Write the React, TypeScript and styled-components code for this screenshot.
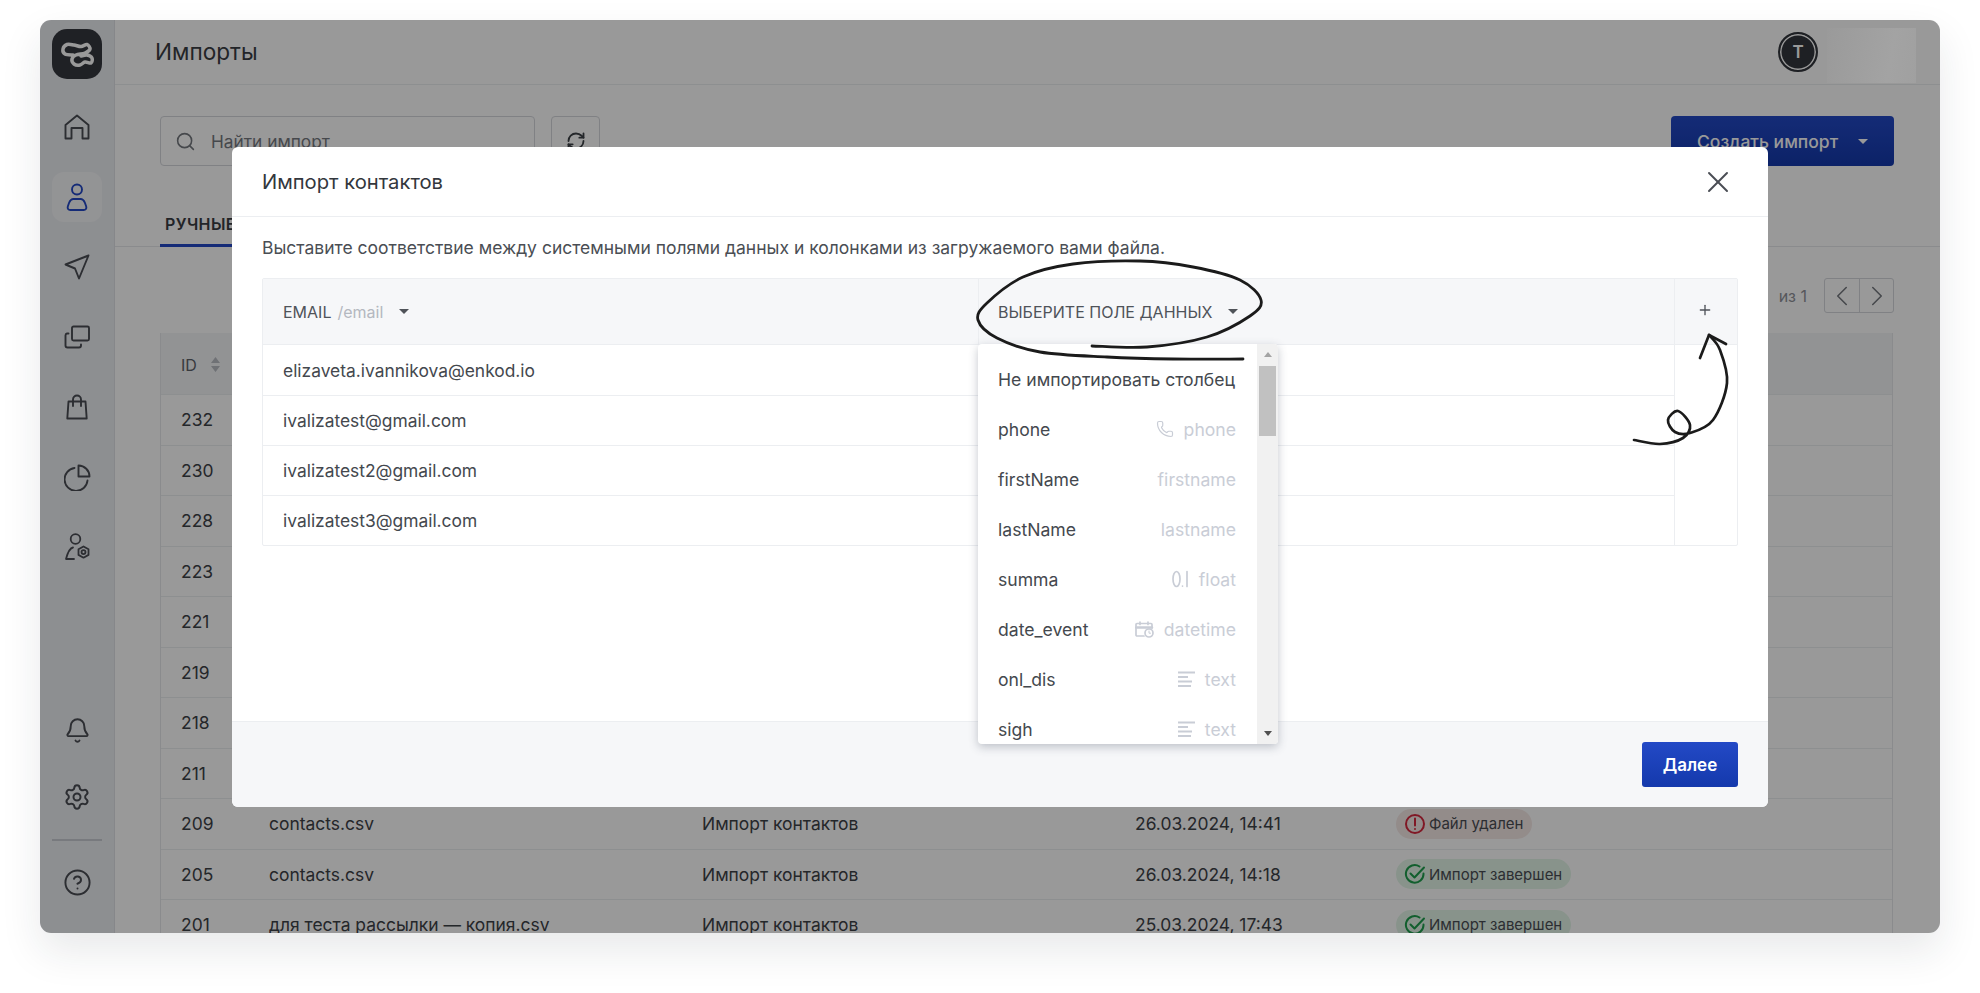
import React from 'react'
import styled, { createGlobalStyle } from 'styled-components'
import { Bell, CircleHelp, ChevronLeft, ChevronRight, Phone, Plus, RefreshCw, Search, Settings, X } from 'lucide-react'

const GlobalStyle = createGlobalStyle`
  html, body {
    margin: 0;
    background: #fff;
    overflow: hidden;
  }
  * {
    box-sizing: border-box;
  }
`

const Page = styled.div`
  position: relative;
  width: 1980px;
  height: 993px;
  padding: 20px 40px 60px;
  background: #fff;
  font-family: Inter, "Noto Sans", sans-serif;
  color: #3d4147;
`

const Window = styled.div`
  position: relative;
  display: flex;
  width: 1900px;
  height: 913px;
  overflow: hidden;
  border-radius: 11px;
  background: #fff;
  box-shadow: 0 18px 40px rgba(30, 35, 50, 0.1);
`

const Sidebar = styled.aside`
  display: flex;
  flex-direction: column;
  align-items: center;
  flex: 0 0 75px;
  padding: 9px 0 26px;
  background: #eceef2;
  border-right: 1px solid #dfe1e6;
`

const Logo = styled.div`
  display: flex;
  align-items: center;
  justify-content: center;
  width: 50px;
  height: 50px;
  margin-bottom: 23px;
  border-radius: 15px;
  background: #35383f;
`

const NavList = styled.nav`
  display: flex;
  flex-direction: column;
  gap: 20px;
`

const NavBottom = styled.div`
  display: flex;
  flex-direction: column;
  align-items: center;
  gap: 17px;
  margin-top: auto;
`

const NavItem = styled.div<{ $active?: boolean }>`
  display: flex;
  align-items: center;
  justify-content: center;
  width: 50px;
  height: 50px;
  border-radius: 12px;
  background: ${p => (p.$active ? '#f6f7f9' : 'transparent')};
  color: ${p => (p.$active ? '#2349c6' : '#4a4d54')};
`

const NavDivider = styled.div`
  width: 50px;
  height: 2px;
  margin-bottom: -1px;
  background: #c9ccd2;
`

const Main = styled.main`
  flex: 1;
  min-width: 0;
  display: flex;
  flex-direction: column;
`

const Header = styled.header`
  display: flex;
  align-items: center;
  flex: 0 0 65px;
  padding: 0 0 0 40px;
  border-bottom: 1px solid #eceef1;
`

const PageTitle = styled.h1`
  margin: 0;
  font-size: 22.6px;
  line-height: 30px;
  font-weight: 400;
  color: #3a3d43;
`

const Avatar = styled.div`
  display: flex;
  align-items: center;
  justify-content: center;
  width: 40px;
  height: 40px;
  margin-left: auto;
  margin-right: 122px;
  border-radius: 50%;
  background: #33363c;
  border: 2px solid #33363c;
  box-shadow: inset 0 0 0 1.5px #fff;
  color: #fff;
  font-size: 17px;
  font-weight: 600;
`

const Toolbar = styled.div`
  display: flex;
  flex: 0 0 81px;
  align-items: flex-start;
  gap: 16px;
  padding: 31px 46px 0 45px;
`

const SearchBox = styled.div`
  display: flex;
  align-items: center;
  gap: 15px;
  width: 375px;
  height: 50px;
  padding: 0 14px;
  border: 1px solid #d5d7dc;
  border-radius: 4px;
  color: #75797f;
  font-size: 17.3px;
`

const RefreshButton = styled.div`
  display: flex;
  align-items: center;
  justify-content: center;
  width: 49px;
  height: 50px;
  border: 1px solid #d5d7dc;
  border-radius: 4px;
  color: #3d4147;
`

const CreateButton = styled.div`
  display: flex;
  align-items: center;
  gap: 4px;
  width: 223px;
  height: 50px;
  margin-left: auto;
  padding-left: 26px;
  border-radius: 4px;
  background: linear-gradient(180deg, #2349c6, #1439ac);
  color: #fff;
  font-size: 17.5px;
  font-weight: 500;
`

const Tabs = styled.div`
  display: flex;
  flex: 0 0 81px;
  padding-left: 45px;
  align-items: flex-end;
  border-bottom: 1px solid #e6e8ec;
`

const Tab = styled.div`
  width: 120px;
  height: 56px;
  padding: 21px 0 0 5px;
  border-bottom: 3px solid #2349c6;
  margin-bottom: -1px;
  font-size: 16px;
  line-height: 24px;
  font-weight: 600;
  color: #3a3d43;
  letter-spacing: 0.4px;
`

const Pager = styled.div`
  display: flex;
  flex: 0 0 35px;
  align-items: center;
  justify-content: flex-end;
  margin: 31px 46px 20px 45px;
  font-size: 16px;
  color: #8f9299;
`

const PagerInput = styled.div`
  width: 60px;
  height: 35px;
  border: 1px solid #d5d7dc;
  border-radius: 4px;
`

const PagerLabel = styled.span`
  margin: 0 17px 0 11px;
`

const PagerButtons = styled.div`
  display: flex;
  width: 70px;
  height: 35px;
  border: 1px solid #d5d7dc;
  border-radius: 3px;
  color: #75797f;
`

const PagerButton = styled.div`
  flex: 1;
  display: flex;
  align-items: center;
  justify-content: center;
  & + & {
    border-left: 1px solid #d5d7dc;
  }
`

const ImportsTable = styled.div`
  flex: 0 0 auto;
  margin: 0 47px 0 45px;
  border-left: 1px solid #e6e8ec;
  border-right: 1px solid #e6e8ec;
`

const TableRow = styled.div<{ $head?: boolean }>`
  display: grid;
  grid-template-columns: 88px 433px 433px 260px 1fr;
  align-items: center;
  height: ${p => (p.$head ? '62px' : '50.5px')};
  padding-left: 20px;
  padding-top: ${p => (p.$head ? '2px' : '0')};
  border-bottom: 1px solid #eceef1;
  background: ${p => (p.$head ? '#f4f5f7' : 'transparent')};
  font-size: ${p => (p.$head ? '16px' : '17.45px')};
  color: #3d4147;
`

const IdHead = styled.div`
  display: flex;
  align-items: center;
  gap: 14px;
  color: #5d6168;
`

const SortIcon = styled.svg`
  width: 9px;
  height: 15px;
  fill: #b9bcc3;
`

const StatusPill = styled.div<{ $tone: 'ok' | 'bad' }>`
  display: inline-flex;
  align-items: center;
  gap: 3px;
  height: 30px;
  padding: 0 9px 0 8px;
  border-radius: 15px;
  margin-left: 1px;
  font-size: 15px;
  color: #4a4d54;
  background: ${p => (p.$tone === 'ok' ? '#e3f6e8' : '#f6e9e7')};
  svg {
    color: ${p => (p.$tone === 'ok' ? '#1f9e4d' : '#d6293e')};
  }
`

const Overlay = styled.div`
  position: absolute;
  inset: 0;
  padding: 127px 0 0 192px;
  background: rgba(0, 0, 0, 0.4);
`

const NamePatch = styled.div`
  position: absolute;
  top: 8px;
  right: 24px;
  width: 89px;
  height: 55px;
  background: linear-gradient(100deg, #9a9a9a, #a3a3a3 70%, #a0a0a0);
`

const Modal = styled.section`
  display: flex;
  flex-direction: column;
  width: 1536px;
  height: 660px;
  border-radius: 6px;
  background: #fff;
`

const ModalHeader = styled.div`
  display: flex;
  align-items: center;
  justify-content: space-between;
  flex: 0 0 70px;
  padding: 0 32px 0 30px;
  border-bottom: 1px solid #eceef1;
`

const ModalTitle = styled.h2`
  margin: 0;
  font-size: 20.2px;
  line-height: 28px;
  font-weight: 400;
  color: #33373d;
`

const CloseIcon = styled(X)`
  color: #4a4d54;
`

const ModalBody = styled.div`
  flex: 1;
  padding: 19px 30px 0;
`

const Hint = styled.p`
  margin: 0 0 18px;
  font-size: 17.5px;
  line-height: 24px;
  color: #4a4e54;
`

const MapTable = styled.div`
  display: grid;
  grid-template-columns: 1fr 63px;
  height: 268px;
  border: 1px solid #eceef1;
  border-radius: 2px;
`

const MapColumns = styled.div`
  display: flex;
  flex-direction: column;
`

const MapHead = styled.div`
  display: grid;
  grid-template-columns: 715px 1fr;
  flex: 0 0 66px;
  background: #f6f7f9;
  border-bottom: 1px solid #eceef1;
`

const MapHeadCell = styled.div`
  position: relative;
  display: flex;
  align-items: center;
  padding: 0 20px;
  font-size: 16px;
  color: #4f5359;
  & + & {
    padding: 0 19px;
    border-left: 1px solid #eceef1;
  }
`

const FieldHint = styled.span`
  margin-left: 6px;
  color: #b4b8c0;
`

const Caret = styled.span<{ $light?: boolean }>`
  display: inline-block;
  margin-left: 16px;
  border-left: 5px solid transparent;
  border-right: 5px solid transparent;
  border-top: 5px solid ${p => (p.$light ? '#fff' : '#4f5359')};
`

const MapRow = styled.div`
  display: grid;
  grid-template-columns: 715px 1fr;
  flex: 0 0 50px;
  align-items: center;
  padding-left: 20px;
  font-size: 17.4px;
  color: #44484e;
  & + & {
    border-top: 1px solid #eceef1;
  }
`

const AddColumn = styled.div`
  border-left: 1px solid #eceef1;
`

const AddHead = styled.div`
  display: flex;
  align-items: center;
  justify-content: center;
  height: 66px;
  padding: 0 2px 4px 0;
  background: #f6f7f9;
  border-bottom: 1px solid #eceef1;
  color: #4f5359;
`

const Dropdown = styled.div`
  position: absolute;
  top: 65px;
  left: -1px;
  z-index: 2;
  display: flex;
  width: 300px;
  height: 400px;
  overflow: hidden;
  border-radius: 4px;
  background: #fff;
  box-shadow: 0 3px 10px rgba(60, 70, 90, 0.3);
`

const OptionList = styled.ul`
  flex: 1;
  margin: 0;
  padding: 10px 21px 0 20px;
  list-style: none;
`

const Option = styled.li`
  display: flex;
  align-items: center;
  justify-content: space-between;
  height: 50px;
  white-space: nowrap;
  font-size: 17.6px;
  color: #44484e;
`

const OptionType = styled.span`
  display: flex;
  align-items: center;
  gap: 10px;
  color: #c9cdd6;
`

const ScrollRail = styled.div`
  display: flex;
  flex-direction: column;
  align-items: center;
  flex: 0 0 21px;
  padding: 8px 2px;
  background: #f1f1f1;
`

const ScrollThumb = styled.div`
  width: 17px;
  height: 70px;
  margin-top: 9px;
  background: #c1c1c1;
`

const ScrollArrow = styled.span<{ $down?: boolean }>`
  border-left: 4px solid transparent;
  border-right: 4px solid transparent;
  ${p =>
    p.$down
      ? 'margin-top: auto; margin-bottom: 0; border-top: 5px solid #505050;'
      : 'border-bottom: 5px solid #a3a3a3;'}
`

const ModalFooter = styled.div`
  display: flex;
  align-items: center;
  justify-content: flex-end;
  flex: 0 0 86px;
  padding: 0 30px 0 0;
  background: #f6f7f9;
  border-top: 1px solid #eceef1;
  border-radius: 0 0 6px 6px;
`

const NextButton = styled.button`
  width: 96px;
  height: 45px;
  border: 0;
  border-radius: 3px;
  background: linear-gradient(180deg, #2349c6, #1439ac);
  color: #fff;
  font-family: inherit;
  font-size: 17px;
  font-weight: 600;
`

const Sketch = styled.svg`
  position: absolute;
  top: 0;
  left: 0;
  z-index: 5;
  fill: none;
  stroke: #1b1b1b;
  stroke-linecap: round;
  stroke-linejoin: round;
  pointer-events: none;
`

type Pt = [number, number]

// catmull-rom through the traced points of the hand drawn marks
const smooth = (pts: Pt[]) => {
  let d = `M${pts[0][0]} ${pts[0][1]}`
  for (let i = 0; i < pts.length - 1; i++) {
    const p0 = pts[Math.max(i - 1, 0)]
    const p1 = pts[i]
    const p2 = pts[i + 1]
    const p3 = pts[Math.min(i + 2, pts.length - 1)]
    const c1 = [p1[0] + (p2[0] - p0[0]) / 6, p1[1] + (p2[1] - p0[1]) / 6]
    const c2 = [p2[0] - (p3[0] - p1[0]) / 6, p2[1] - (p3[1] - p1[1]) / 6]
    d += ` C${c1[0]} ${c1[1]} ${c2[0]} ${c2[1]} ${p2[0]} ${p2[1]}`
  }
  return d
}

const ellipseMark: Pt[] = [
  [1092, 346], [1147, 347], [1207, 337], [1250, 316], [1261, 300], [1240, 280], [1193, 267], [1140, 261],
  [1073, 264], [1023, 277], [987, 303], [978, 320], [997, 338], [1040, 352], [1107, 357], [1173, 359], [1243, 359],
]

const arrowMark: Pt[] = [
  [1634, 440], [1660, 444], [1683, 438], [1690, 425], [1678, 411], [1668, 420], [1675, 432], [1690, 433],
  [1713, 420], [1727, 383], [1720, 350], [1709, 335],
]

const logoMark: Pt[] = [
  [21, 26], [13, 25], [11, 20], [15, 15.5], [22, 16], [29, 17.5], [35, 15.5], [38, 20], [33, 24], [24, 26],
  [20, 30], [22, 35], [28, 36], [33, 33], [39, 34], [40, 29], [35, 26], [29, 27],
]

const HomeIcon = () => (
  <svg width="26" height="26" viewBox="0 0 26 26" fill="none" stroke="currentColor" strokeWidth="1.9" strokeLinejoin="round" strokeLinecap="round">
    <path d="M1.500 24.500V11L13 1.500 24.500 11v13.500h-6V14h-11v10.500z" />
  </svg>
)

const UserIcon = () => (
  <svg width="24" height="28" viewBox="0 0 24 28" fill="none" stroke="currentColor" strokeWidth="1.9" strokeLinejoin="round">
    <circle cx="12" cy="6.500" r="5" />
    <path d="M8.500 16h7c2.500 0 3.500 1.500 4.500 4l1.200 3.500c.6 2-.5 3.500-2.500 3.500H5.300c-2 0-3.100-1.500-2.500-3.500L4 20c1-2.500 2-4 4.500-4z" />
  </svg>
)

const SendIcon = () => (
  <svg width="26" height="26" viewBox="0 0 26 26" fill="none" stroke="currentColor" strokeWidth="1.9" strokeLinejoin="round" strokeLinecap="round">
    <path d="M24.500 1.500L1.500 10.500l9.500 4 4 10z" />
  </svg>
)

const CopiesIcon = () => (
  <svg width="26" height="24" viewBox="0 0 26 24" fill="none" stroke="currentColor" strokeWidth="1.9" strokeLinejoin="round" strokeLinecap="round">
    <rect x="8" y="1.500" width="17" height="14" rx="1.500" />
    <path d="M4.500 8.500H3A2 2 0 0 0 1.500 10.500v10a2 2 0 0 0 2 2H15a2 2 0 0 0 2-2v-1" />
  </svg>
)

const BagIcon = () => (
  <svg width="24" height="26" viewBox="0 0 24 26" fill="none" stroke="currentColor" strokeWidth="1.9" strokeLinejoin="round" strokeLinecap="round">
    <path d="M3.500 7.500h17l1.200 17H2.300z" />
    <path d="M8 12V5.500a4 4 0 0 1 8 0V12" />
  </svg>
)

const PieIcon = () => (
  <svg width="27" height="27" viewBox="0 0 27 27" fill="none" stroke="currentColor" strokeWidth="1.9" strokeLinejoin="round" strokeLinecap="round">
    <path d="M10.500 4A11.500 11.500 0 1 0 23.500 16.500" />
    <path d="M14.500 1.500a11 11 0 0 1 11 11h-11z" />
  </svg>
)

const UserGearIcon = () => (
  <svg width="27" height="29" viewBox="0 0 27 29" fill="none" stroke="currentColor" strokeWidth="1.800" strokeLinejoin="round" strokeLinecap="round">
    <circle cx="11.500" cy="6" r="4.800" />
    <path d="M9 14.500c-3 .5-5 4-7 11.500h8" />
    <path d="M19.500 13.500l5 2.800v5.600l-5 2.800-5-2.800v-5.600z" />
    <circle cx="19.500" cy="19.100" r="2" />
  </svg>
)

const LogoMark = () => (
  <svg width="50" height="50" viewBox="0 0 50 50" fill="none" stroke="#fff" strokeWidth="3.500" strokeLinecap="round" strokeLinejoin="round">
    <path d={smooth(logoMark)} />
  </svg>
)

const FloatIcon = () => (
  <svg width="17" height="18" viewBox="0 0 17 18" fill="none" stroke="currentColor" strokeWidth="1.700" strokeLinecap="round">
    <ellipse cx="4.500" cy="9" rx="3.500" ry="7.500" />
    <path d="M10.500 16v.1M15 1.500v15" />
  </svg>
)

const DatetimeIcon = () => (
  <svg width="19" height="17" viewBox="0 0 19 17" fill="none" stroke="currentColor" strokeWidth="1.700" strokeLinecap="round">
    <path d="M9 15H2a1 1 0 0 1-1-1V3.500a1 1 0 0 1 1-1h14a1 1 0 0 1 1 1V7" />
    <path d="M1 6.500h16" strokeWidth="2.500" />
    <path d="M5 1v2.500M13 1v2.500" />
    <circle cx="14" cy="12" r="4" />
    <path d="M14 10v2.200h1.500" strokeWidth="1" />
  </svg>
)

const TextIcon = () => (
  <svg width="17" height="16" viewBox="0 0 17 16" fill="none" stroke="currentColor" strokeWidth="1.800">
    <path d="M0 1.500h17M0 6h10M0 10.500h14M0 15h13" />
  </svg>
)

const CheckBadge = () => (
  <svg width="22" height="22" viewBox="0 0 22 22" fill="none" stroke="currentColor" strokeWidth="2" strokeLinecap="round" strokeLinejoin="round">
    <path d="M19.500 10.500a8.800 8.800 0 1 1-4-7" />
    <path d="M6.500 10.500l4 4L20 4.500" />
  </svg>
)

const AlertBadge = () => (
  <svg width="22" height="22" viewBox="0 0 22 22" fill="none" stroke="currentColor" strokeWidth="2" strokeLinecap="round">
    <circle cx="11" cy="11" r="9" />
    <path d="M11 5.500v7M11 16v.1" />
  </svg>
)

const navItems = [
  { icon: <HomeIcon /> },
  { icon: <UserIcon />, active: true },
  { icon: <SendIcon /> },
  { icon: <CopiesIcon /> },
  { icon: <BagIcon /> },
  { icon: <PieIcon /> },
  { icon: <UserGearIcon /> },
]

const imports = [
  { id: 232 }, { id: 230 }, { id: 228 }, { id: 223 }, { id: 221 }, { id: 219 }, { id: 218 }, { id: 211 },
  { id: 209, file: 'contacts.csv', type: 'Импорт контактов', date: '26.03.2024, 14:41', status: 'bad' as const },
  { id: 205, file: 'contacts.csv', type: 'Импорт контактов', date: '26.03.2024, 14:18', status: 'ok' as const },
  { id: 201, file: 'для теста рассылки — копия.csv', type: 'Импорт контактов', date: '25.03.2024, 17:43', status: 'ok' as const },
]

const emails = ['elizaveta.ivannikova@enkod.io', 'ivalizatest@gmail.com', 'ivalizatest2@gmail.com', 'ivalizatest3@gmail.com']

const options = [
  { name: 'Не импортировать столбец' },
  { name: 'phone', type: 'phone', icon: <Phone size={18} strokeWidth={1.6} /> },
  { name: 'firstName', type: 'firstname' },
  { name: 'lastName', type: 'lastname' },
  { name: 'summa', type: 'float', icon: <FloatIcon /> },
  { name: 'date_event', type: 'datetime', icon: <DatetimeIcon /> },
  { name: 'onl_dis', type: 'text', icon: <TextIcon /> },
  { name: 'sigh', type: 'text', icon: <TextIcon /> },
]

export default function App() {
  return (
    <Page>
      <GlobalStyle />
      <Window>
        <Sidebar>
          <Logo>
            <LogoMark />
          </Logo>
          <NavList>
            {navItems.map((item, i) => (
              <NavItem key={i} $active={item.active}>
                {item.icon}
              </NavItem>
            ))}
          </NavList>
          <NavBottom>
            <NavItem>
              <Bell size={27} strokeWidth={1.7} />
            </NavItem>
            <NavItem>
              <Settings size={28} strokeWidth={1.7} />
            </NavItem>
            <NavDivider />
            <NavItem>
              <CircleHelp size={29} strokeWidth={1.6} />
            </NavItem>
          </NavBottom>
        </Sidebar>
        <Main>
          <Header>
            <PageTitle>Импорты</PageTitle>
            <Avatar>Т</Avatar>
          </Header>
          <Toolbar>
            <SearchBox>
              <Search size={21} strokeWidth={1.8} />
              Найти импорт
            </SearchBox>
            <RefreshButton>
              <RefreshCw size={20} strokeWidth={2.2} />
            </RefreshButton>
            <CreateButton>
              Создать импорт
              <Caret $light />
            </CreateButton>
          </Toolbar>
          <Tabs>
            <Tab>РУЧНЫЕ</Tab>
          </Tabs>
          <Pager>
            <PagerInput />
            <PagerLabel>из 1</PagerLabel>
            <PagerButtons>
              <PagerButton>
                <ChevronLeft size={34} strokeWidth={1.1} />
              </PagerButton>
              <PagerButton>
                <ChevronRight size={34} strokeWidth={1.1} />
              </PagerButton>
            </PagerButtons>
          </Pager>
          <ImportsTable>
            <TableRow $head>
              <IdHead>
                ID
                <SortIcon viewBox="0 0 9 15">
                  <path d="M4.500 0L9 6H0zM4.500 15L0 9h9z" />
                </SortIcon>
              </IdHead>
            </TableRow>
            {imports.map(row => (
              <TableRow key={row.id}>
                <div>{row.id}</div>
                <div>{row.file}</div>
                <div>{row.type}</div>
                <div>{row.date}</div>
                <div>
                  {row.status === 'bad' && (
                    <StatusPill $tone="bad">
                      <AlertBadge />
                      Файл удален
                    </StatusPill>
                  )}
                  {row.status === 'ok' && (
                    <StatusPill $tone="ok">
                      <CheckBadge />
                      Импорт завершен
                    </StatusPill>
                  )}
                </div>
              </TableRow>
            ))}
          </ImportsTable>
        </Main>
        <Overlay>
          <Modal>
            <ModalHeader>
              <ModalTitle>Импорт контактов</ModalTitle>
              <CloseIcon size={36} strokeWidth={1.3} />
            </ModalHeader>
            <ModalBody>
              <Hint>Выставите соответствие между системными полями данных и колонками из загружаемого вами файла.</Hint>
              <MapTable>
                <MapColumns>
                  <MapHead>
                    <MapHeadCell>
                      EMAIL <FieldHint>/email</FieldHint>
                      <Caret />
                    </MapHeadCell>
                    <MapHeadCell>
                      ВЫБЕРИТЕ ПОЛЕ ДАННЫХ
                      <Caret />
                      <Dropdown>
                        <OptionList>
                          {options.map(o => (
                            <Option key={o.name}>
                              {o.name}
                              {o.type && (
                                <OptionType>
                                  {o.icon}
                                  {o.type}
                                </OptionType>
                              )}
                            </Option>
                          ))}
                        </OptionList>
                        <ScrollRail>
                          <ScrollArrow />
                          <ScrollThumb />
                          <ScrollArrow $down />
                        </ScrollRail>
                      </Dropdown>
                    </MapHeadCell>
                  </MapHead>
                  {emails.map(email => (
                    <MapRow key={email}>{email}</MapRow>
                  ))}
                </MapColumns>
                <AddColumn>
                  <AddHead>
                    <Plus size={16} strokeWidth={2} />
                  </AddHead>
                </AddColumn>
              </MapTable>
            </ModalBody>
            <ModalFooter>
              <NextButton>Далее</NextButton>
            </ModalFooter>
          </Modal>
        </Overlay>
        <NamePatch />
      </Window>
      <Sketch width="1980" height="993" viewBox="0 0 1980 993">
        <path d={smooth(ellipseMark)} strokeWidth="2.800" />
        <path d={smooth(arrowMark)} strokeWidth="2.700" />
        <path d="M1700 358L1709 335 1726 344" strokeWidth="2.700" />
      </Sketch>
    </Page>
  )
}
